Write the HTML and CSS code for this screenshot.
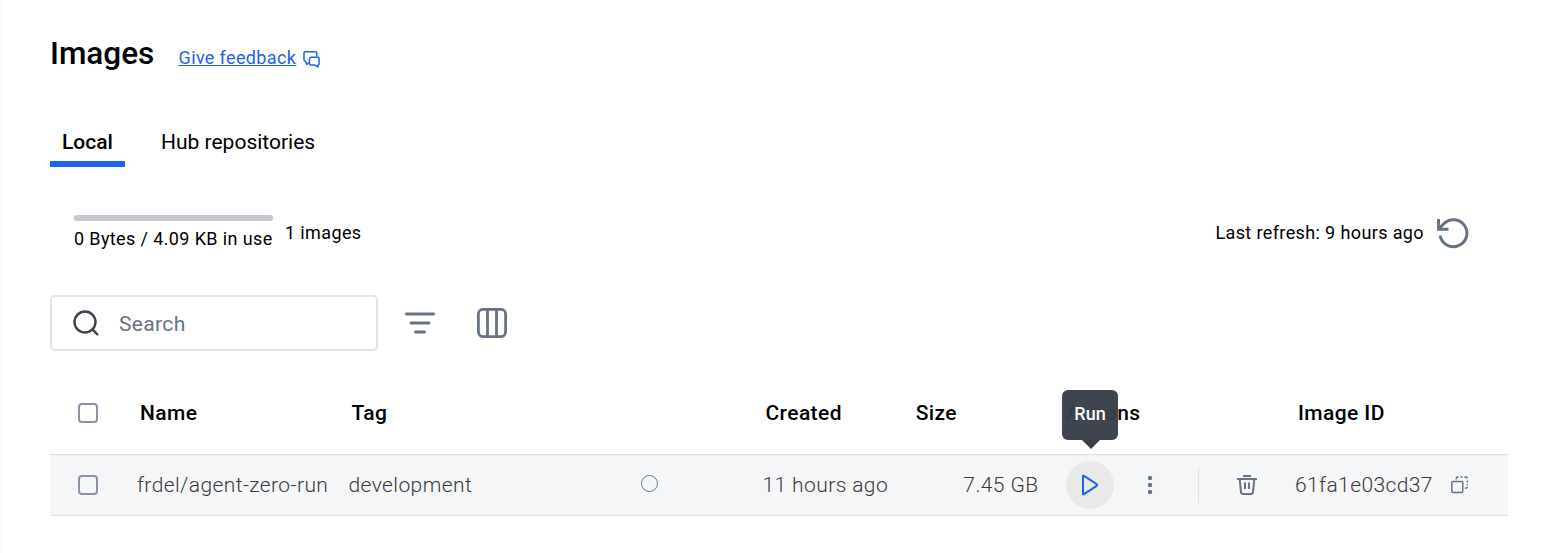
FILE: index.html
```html
<!DOCTYPE html>
<html lang="en">
<head>
<meta charset="utf-8">
<title>Images</title>
<link rel="stylesheet" href="styles.css">
</head>
<body>
<main class="page">
  <header class="title-row">
    <h1 class="title">Images</h1>
    <a class="feedback" href="#"><span class="feedback-text">Give feedback</span>
      <svg class="feedback-icon" width="18" height="18" viewBox="0 0 18 18" fill="none" stroke="currentColor" stroke-width="1.5" stroke-linejoin="round"><path d="M13.800 5.600V2Q13.800.8 12.600.8H2.200Q1 .8 1 2V8.800Q1 10 2.200 10.200L3.800 13.500 6.200 11.200"/><path d="M8.300 6.200H14.900Q16.100 6.200 16.100 7.400V12.700Q16.100 13.900 14.900 13.900V16.100L11.800 14.100H8.300Q6.500 14.100 6.500 12.700V7.800Q6.500 6.200 8.300 6.200Z"/></svg>
    </a>
  </header>
  <nav class="tabs">
    <a class="tab tab-active">Local</a>
    <a class="tab">Hub repositories</a>
  </nav>
  <section class="status">
    <div class="usage">
      <div class="usage-bar"></div>
      <div class="usage-text">0 Bytes / 4.09 KB in use</div>
    </div>
    <div class="count">1 images</div>
    <div class="refresh-text">Last refresh: 9 hours ago</div>
    <svg class="refresh-icon" width="34" height="34" viewBox="0 0 34 34" fill="none" stroke="currentColor" stroke-width="3"><path d="M4.100 19.500A13.500 13.500 0 1 0 7.500 8L2.500 13"/><path d="M2.500 3V13.300H12.500"/></svg>
  </section>
  <section class="toolbar">
    <div class="search">
      <svg width="26" height="26" viewBox="0 0 26 26" fill="none" stroke="#3b424d" stroke-width="2.400" stroke-linecap="round"><circle cx="12" cy="12" r="10.500"/><path d="m19.500 19.500 4.800 4.800"/></svg>
      <span class="search-text">Search</span>
    </div>
    <svg class="filter-icon" width="30" height="22" viewBox="0 0 30 22" stroke="currentColor" stroke-width="2.800" stroke-linecap="round"><path d="M1.400 2H28.600M6 11H24M10.500 20H19.500"/></svg>
    <svg class="columns-icon" width="30" height="30" viewBox="0 0 30 30" fill="none" stroke="currentColor" stroke-width="2.800"><rect x="1.400" y="1.400" width="27.200" height="27.200" rx="4.500"/><path d="M10.500 1.500V28.500M19.500 1.500V28.500"/></svg>
  </section>
  <section class="table">
    <div class="row head">
      <div class="cell check"><span class="box"></span></div>
      <div class="cell">Name</div>
      <div class="cell">Tag</div>
      <div class="cell"></div>
      <div class="cell">Created</div>
      <div class="cell">Size</div>
      <div class="cell head-actions">Actions</div>
      <div class="cell">Image ID</div>
    </div>
    <div class="row item">
      <div class="cell check"><span class="box"></span></div>
      <div class="cell name">frdel/agent-zero-run</div>
      <div class="cell">development</div>
      <div class="cell"><span class="state"></span></div>
      <div class="cell">11 hours ago</div>
      <div class="cell size">7.45 GB</div>
      <div class="cell actions">
        <div class="run">
          <svg width="18" height="22" viewBox="0 0 18 22" fill="none" stroke="#1d63ed" stroke-width="2" stroke-linejoin="round"><path d="M2 2.300Q2 1.300 3 1.800L15.700 10.200Q16.600 11 15.700 11.800L3 20.200Q2 20.700 2 19.700Z"/></svg>
          <div class="tooltip">Run</div>
        </div>
        <svg class="more" width="6" height="20" viewBox="0 0 6 20" fill="currentColor"><circle cx="3" cy="3" r="2.200"/><circle cx="3" cy="10" r="2.200"/><circle cx="3" cy="17" r="2.200"/></svg>
        <span class="divider"></span>
        <svg class="trash" width="20" height="20" viewBox="0 0 20 20" fill="none" stroke="currentColor" stroke-width="2"><path d="M6 1H14M0 4H20M2.700 4 4 17.200Q4.200 19 6 19H14Q15.800 19 16 17.200L17.300 4M8 7.500V14M12 7.500V14"/></svg>
      </div>
      <div class="cell id">61fa1e03cd37
        <svg class="copy" width="18" height="18" viewBox="0 0 18 18" fill="none" stroke="currentColor" stroke-width="1.500"><rect x=".8" y="5.600" width="11" height="11" rx="1.500"/><path d="M5.300 3.500V2.200Q5.300 1 6.500 1H7.500M9.500 1H11.500M13.300 1H15Q16.300 1 16.300 2.500M16.300 4.500V6.500M16.300 8.300V9.500M16.300 11Q16.300 12.200 14 12.200"/></svg>
      </div>
    </div>
  </section>
</main>
</body>
</html>
```
FILE: styles.css
```css
* { box-sizing: border-box; }
body {
  margin: 0;
  background: #fff;
  color: #000;
  font-family: Roboto, sans-serif;
  font-size: 20px;
}
svg { display: block; flex: none; }
.page {
  height: 553px;
  border-left: 2px solid #f9f9fa;
  padding: 32px 49px 0 48px;
}
.title-row { display: flex; height: 42px; }
.title {
  width: 128.500px;
  margin: 0;
  font-size: 31.500px;
  font-weight: 500;
  line-height: 43px;
  white-space: nowrap;
}
.feedback {
  display: flex;
  gap: 6.500px;
  padding-top: 14px;
  color: #1d63ed;
  font-size: 18px;
  line-height: 24px;
  letter-spacing: .37px;
  text-decoration: none;
}
.feedback-text { text-decoration: underline; }
.feedback-icon { margin-top: 4.500px; }
.tabs { display: flex; gap: 24px; margin-top: 44px; height: 49px; }
.tab {
  padding: 0 12px;
  font-size: 21px;
  line-height: 48px;
  letter-spacing: 0;
}
.tab-active {
  width: 75px;
  border-bottom: 6px solid #1d63ed;
  font-weight: 500;
}
.status {
  display: flex;
  height: 48px;
  margin-top: 42px;
  padding: 0 38px 0 24px;
  align-items: center;
  font-size: 18px;
  line-height: 24px;
  letter-spacing: .38px;
  white-space: nowrap;
}
.usage { width: 199px; }
.usage-bar { height: 6px; border-radius: 3px; background: #c4c8d1; }
.usage-text { margin-top: 6px; }
.count { margin-left: 12px; }
.refresh-text { margin-left: auto; }
.refresh-icon { margin-left: 12px; color: #677285; }
.toolbar { display: flex; align-items: center; margin-top: 38px; height: 56px; }
.search {
  display: flex;
  align-items: center;
  width: 328px;
  height: 56px;
  padding-left: 21px;
  border: 2px solid #e1e2e6;
  border-radius: 5px;
}
.search-text { margin-left: 20px; padding-top: 2px; color: #677285; font-size: 21px; letter-spacing: .35px; }
.filter-icon { margin-left: 27px; color: #677285; }
.columns-icon { margin-left: 42px; color: #677285; }
.table { margin-top: 20px; }
.row {
  display: grid;
  grid-template-columns: 87px 211.500px 292.500px 121.500px 150.200px 151.300px 231px 213px;
  align-items: center;
  font-size: 21px;
  letter-spacing: .4px;
  white-space: nowrap;
}
.head { height: 83px; font-weight: 500; }
.head .cell { padding-left: 3px; }
.head .head-actions { padding-left: 2px; }
.item {
  height: 62px;
  border-top: 1px solid #dcdee1;
  border-bottom: 1px solid #dcdee1;
  background: #f5f6f8;
  color: #393939;
  font-weight: 300;
}
.head .check, .check { padding-left: 28px; }
.box {
  display: block;
  width: 20px;
  height: 20px;
  border: 2px solid #8993a5;
  border-radius: 4px;
}
.state {
  display: block;
  width: 17px;
  height: 17px;
  margin-top: -4px;
  border: 1.500px solid #677285;
  border-radius: 50%;
}
.size { padding-right: 25.500px; text-align: right; }
.actions { display: flex; align-items: center; padding-left: 2px; color: #677285; }
.run {
  position: relative;
  display: flex;
  width: 48px;
  height: 48px;
  align-items: center;
  justify-content: center;
  border-radius: 50%;
  background: #e9e9e9;
}
.tooltip {
  position: absolute;
  left: -4px;
  bottom: 69px;
  width: 56px;
  height: 50px;
  border-radius: 6px;
  background: rgba(57, 63, 73, .97);
  color: #fff;
  font-size: 18px;
  font-weight: 500;
  line-height: 48px;
  letter-spacing: 0;
  text-align: center;
}
.tooltip::after {
  content: "";
  position: absolute;
  top: 50px;
  left: 20px;
  border: 9px solid transparent;
  border-top-color: #393f49;
  border-bottom: 0;
}
.more { margin-left: 33px; }
.divider { width: 1px; height: 36px; margin-left: 45px; background: #e1e2e6; }
.trash { margin-left: 38px; }
.id { display: flex; align-items: center; gap: 18.500px; }
.copy { color: #677285; }
```
